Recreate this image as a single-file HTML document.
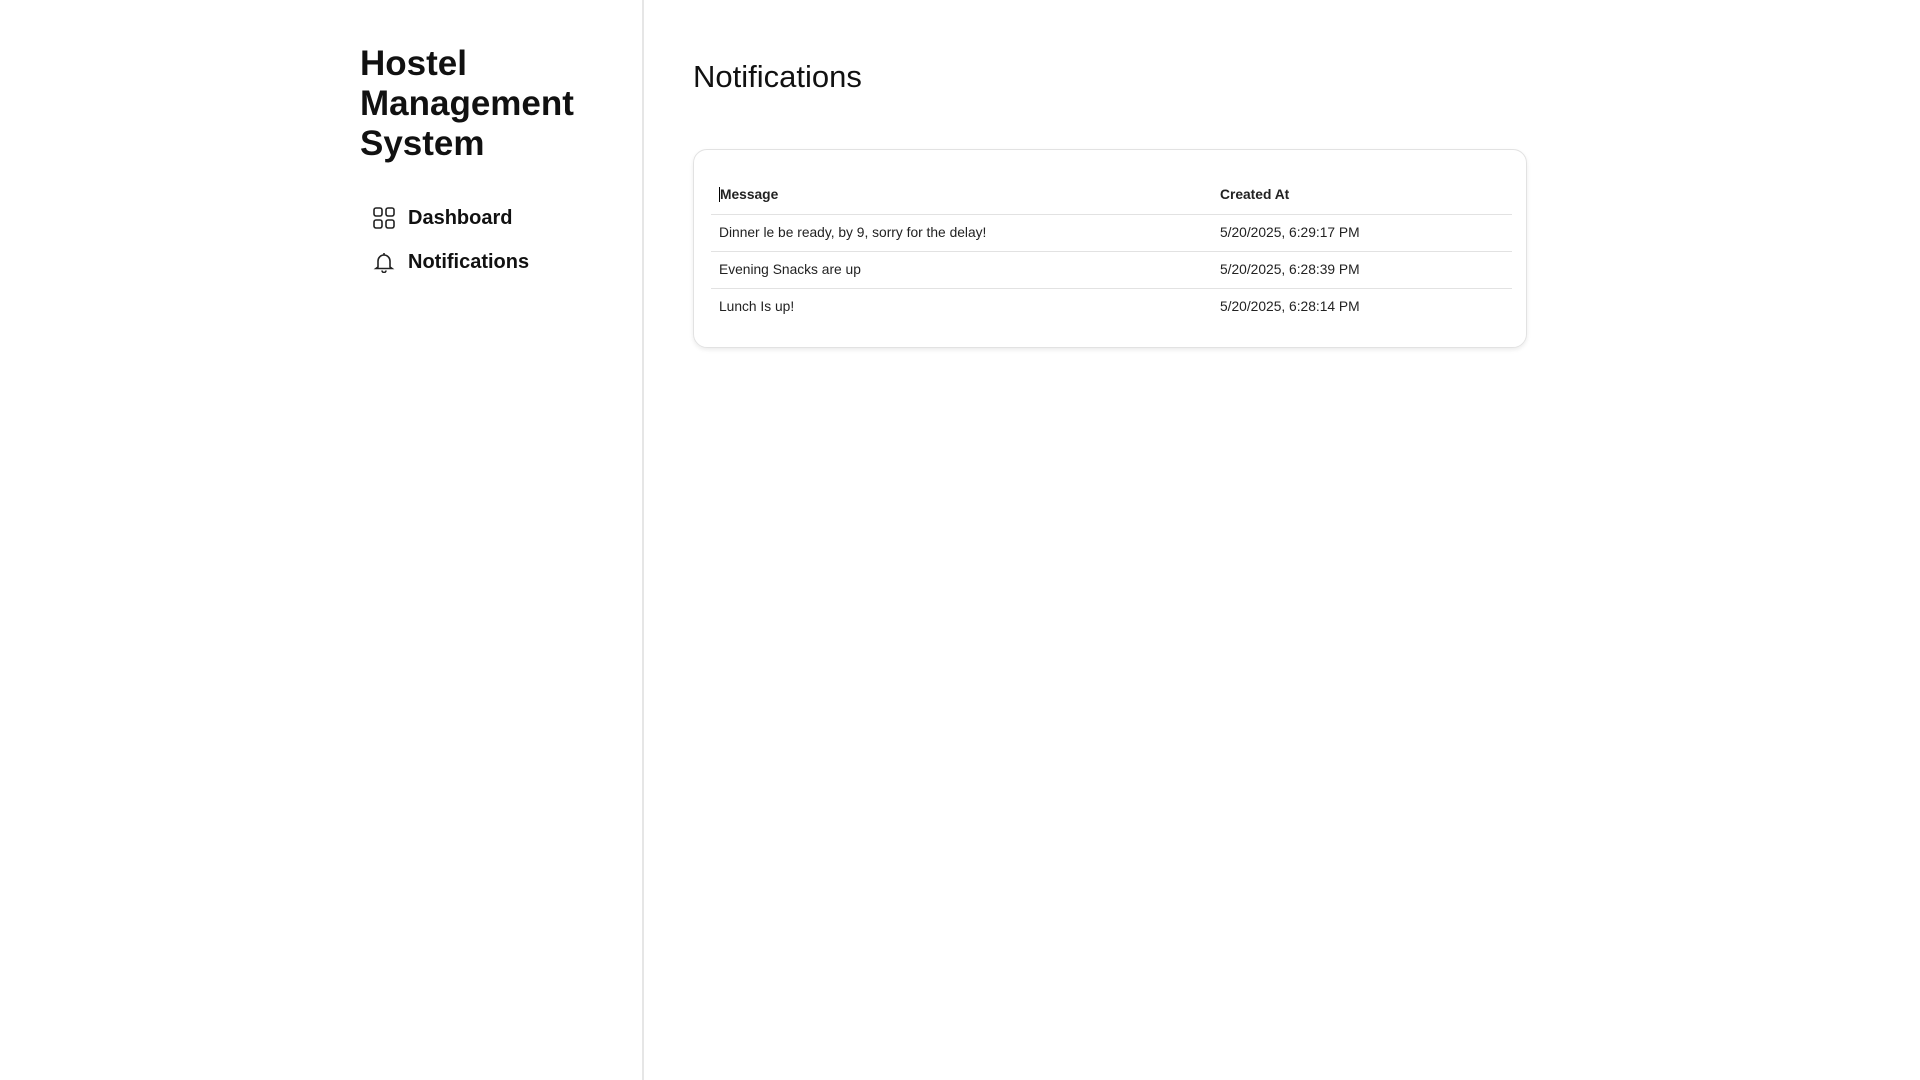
<!DOCTYPE html>
<html><head><meta charset="utf-8"><style>
*{margin:0;padding:0;box-sizing:border-box}
body{width:1920px;height:1080px;background:#fff;font-family:"Segoe UI","Liberation Sans",sans-serif;color:#111;position:relative;overflow:hidden}
.side{position:absolute;left:0;top:0;width:644px;height:1080px;border-right:2px solid #e6e6e6}
.title{position:absolute;left:360px;top:44px;font-size:35px;line-height:40px;font-weight:600;color:#111}
.nav{position:absolute;left:373px;font-size:20px;font-weight:600;display:flex;align-items:center}
.nav span{position:absolute;left:35px;white-space:nowrap}
h1{position:absolute;left:693px;top:59px;font-size:31px;font-weight:400}
.card{position:absolute;left:693px;top:149px;width:834px;height:199px;border:1px solid #e2e2e2;border-radius:14px;box-shadow:0 2px 4px rgba(0,0,0,.08)}
table{position:absolute;left:17px;top:26px;width:801px;border-collapse:collapse;font-size:13.8px}
td,th{text-align:left;padding:0 8px;height:37px;border-bottom:1px solid #e2e2e2;color:#222}
th{font-weight:600;height:38px}
tr:last-child td{border-bottom:none}
.c2{width:300px}
</style></head><body>
<div class="side">
<div class="title">Hostel<br>Management<br>System</div>
<div class="nav" style="top:207px">
<svg width="22" height="22" viewBox="0 0 22 22" fill="none" stroke="#222" stroke-width="1.6"><rect x="1" y="1" width="8" height="8" rx="2"/><rect x="13" y="1" width="8" height="8" rx="2"/><rect x="1" y="13" width="8" height="8" rx="2"/><rect x="13" y="13" width="8" height="8" rx="2"/></svg>
<span style="top:0px">Dashboard</span></div>
<div class="nav" style="top:251px">
<svg width="22" height="22" viewBox="0 0 22 22" fill="none" stroke="#222" stroke-width="1.6"><path d="M11 2v2M5 16V10a6 6 0 0 1 12 0v6l2 1.5H3z"/><path d="M9 19.5a2 2 0 0 0 4 0"/></svg>
<span style="top:0px">Notifications</span></div>
</div>
<h1>Notifications</h1>
<div class="card"><table>
<tr><th><span style="border-left:1px solid #000;padding-left:0">Message</span></th><th class="c2">Created At</th></tr>
<tr><td>Dinner le be ready, by 9, sorry for the delay!</td><td>5/20/2025, 6:29:17 PM</td></tr>
<tr><td>Evening Snacks are up</td><td>5/20/2025, 6:28:39 PM</td></tr>
<tr><td>Lunch Is up!</td><td>5/20/2025, 6:28:14 PM</td></tr>
</table></div>
</body></html>
